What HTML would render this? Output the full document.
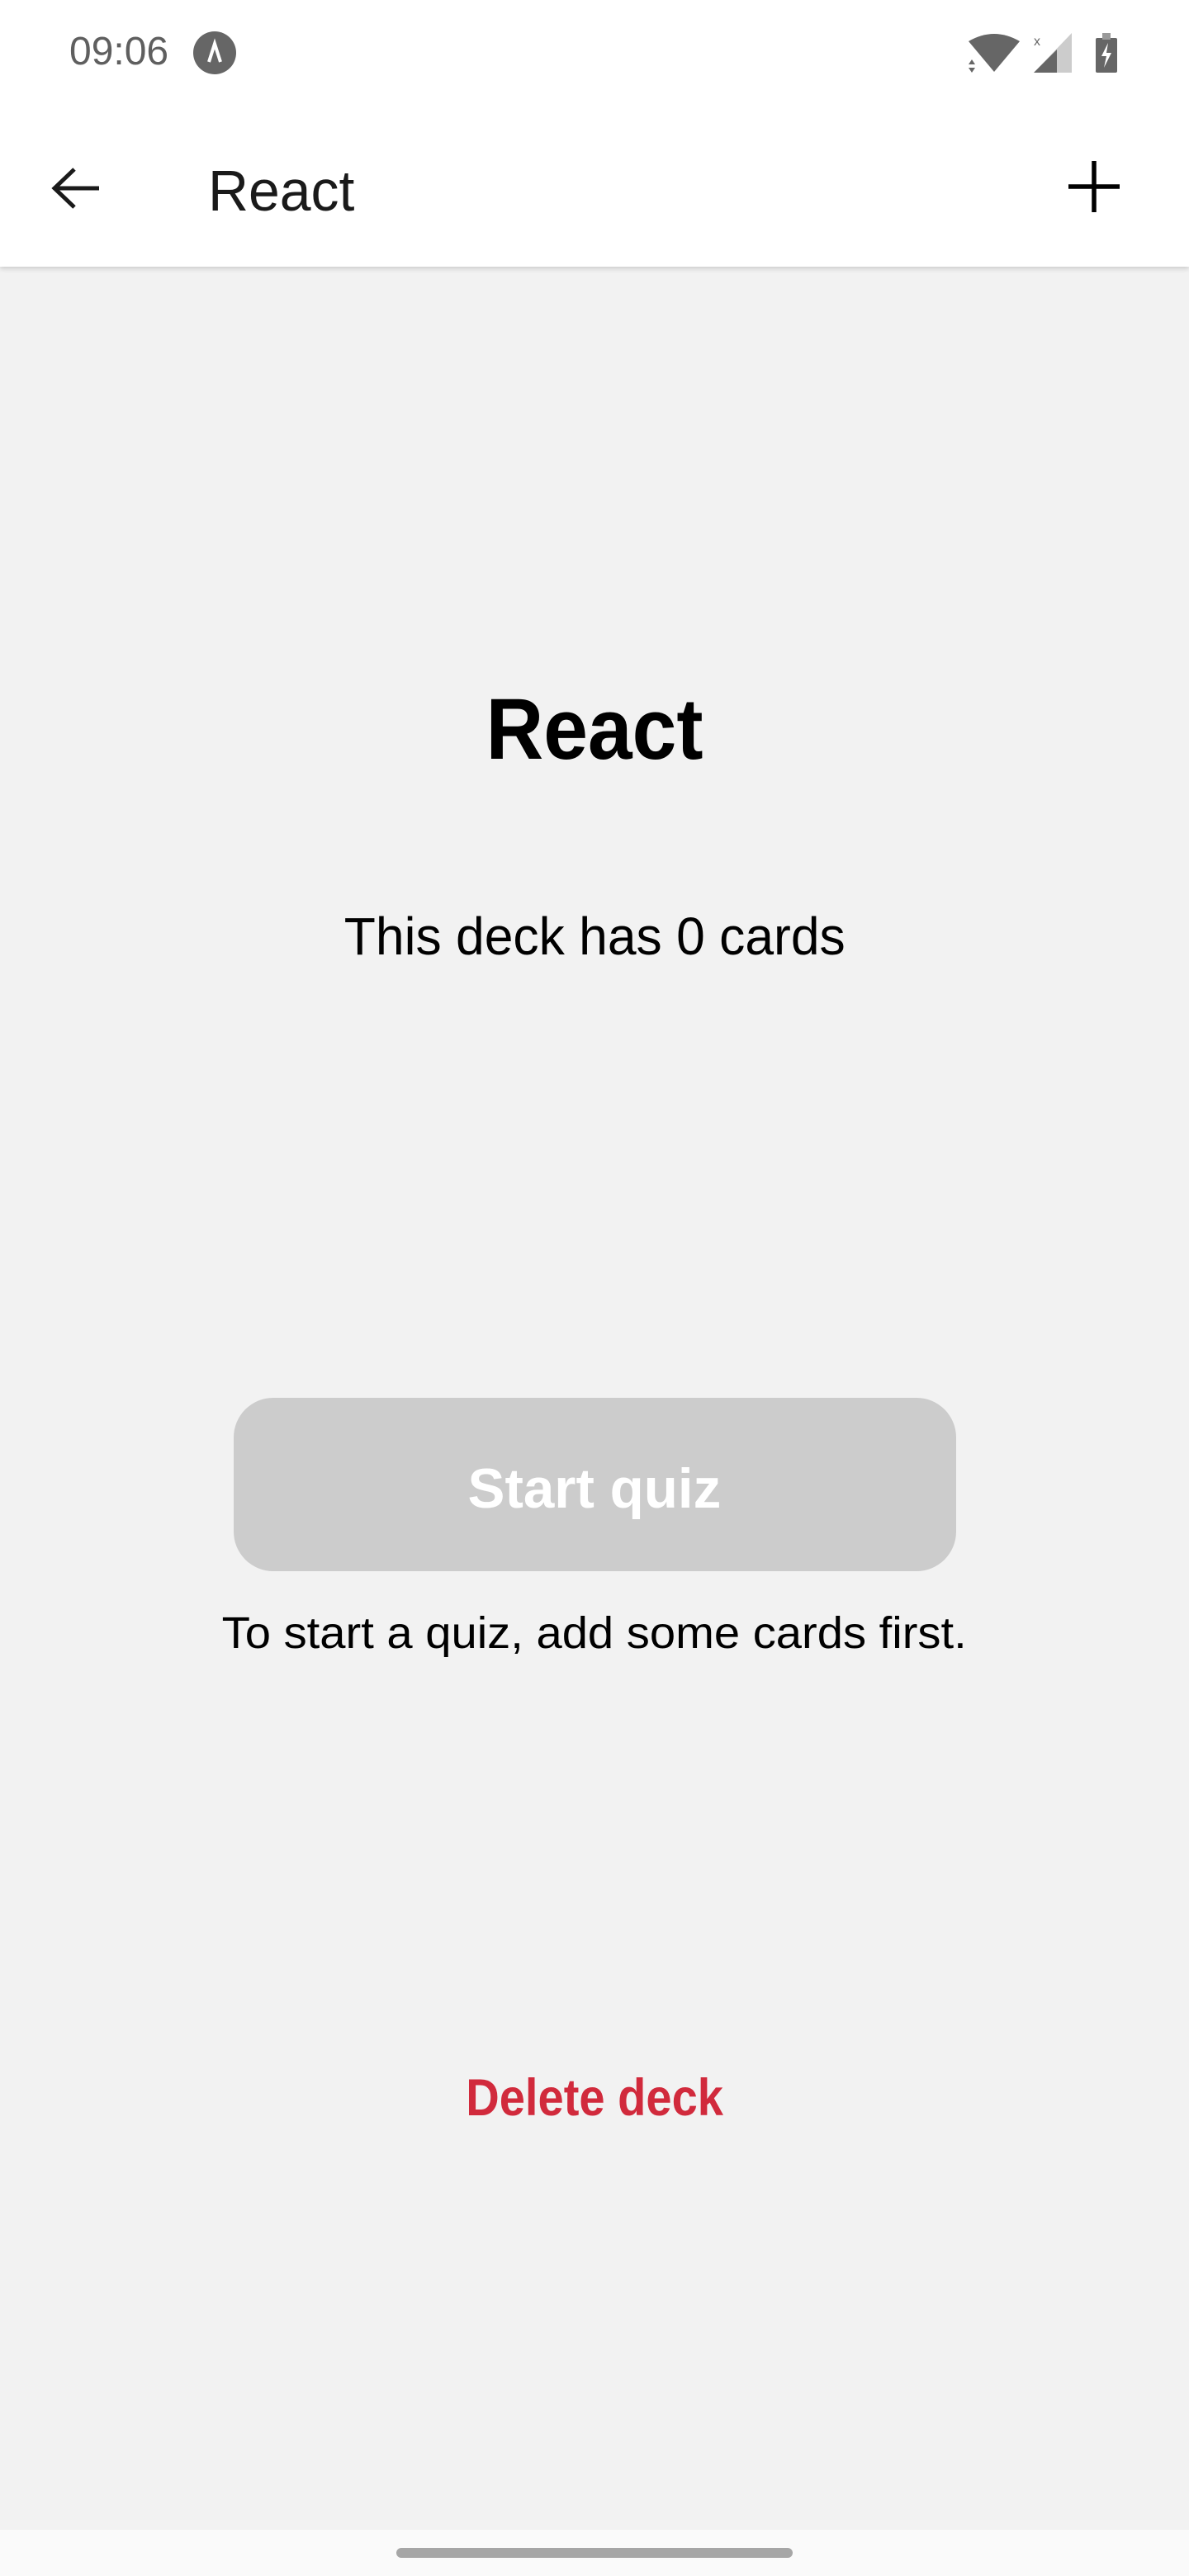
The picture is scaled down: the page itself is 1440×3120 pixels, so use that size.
<!DOCTYPE html>
<html><head><meta charset="utf-8"><style>
*{margin:0;padding:0;box-sizing:border-box}
html,body{width:1440px;height:3120px;overflow:hidden;background:#f2f2f2;font-family:"Liberation Sans",Arial,sans-serif}
.abs{position:absolute}
.c{position:absolute;left:0;width:1440px;text-align:center;line-height:1;white-space:nowrap}
.c span{display:inline-block}
</style></head><body>
<div class="abs" style="left:0;top:0;width:1440px;height:323px;background:#fff;box-shadow:0 2px 6px rgba(0,0,0,0.18)"></div>
<!-- status bar -->
<div class="abs" style="left:84px;top:39px;font-size:48px;line-height:1;color:#5f5f5f;transform:scaleX(1.0);transform-origin:left">09:06</div>
<svg class="abs" style="left:234px;top:38px" width="52" height="52" viewBox="0 0 52 52"><circle cx="26" cy="26" r="26" fill="#666"/><path d="M19 37 L26 15 L33 37" stroke="#fff" stroke-width="4" fill="none"/></svg>
<svg class="abs" style="left:1170px;top:38px" width="190" height="52" viewBox="0 0 190 52">
<path d="M3 12 Q34 -6 65 12 L34 49 Z" fill="#666"/>
<path d="M3 40 l4 -6 l4 6z M3 44 l8 0 l-4 6z" fill="#666"/>
<path d="M128 2 V50 H82 Z" fill="#ccc"/><path d="M82 50 L110 22 V50 Z" fill="#666"/>
<text x="82" y="17" font-size="16" fill="#666" font-family="Liberation Sans">x</text>
<rect x="157" y="8" width="26" height="42" rx="2" fill="#666"/><rect x="165" y="2" width="10" height="8" fill="#999"/>
<path d="M172 14 L164 30 H170 L167 44 L176 26 H170 Z" fill="#fff"/>
</svg>
<!-- header -->
<svg class="abs" style="left:60px;top:198px" width="64" height="60" viewBox="0 0 64 60"><path d="M60 30 H8 M30 7 L6 30 L30 53" stroke="#1a1a1a" stroke-width="5" fill="none"/></svg>
<div class="abs" style="left:252px;top:196px;font-size:70px;line-height:1;color:#1a1a1a;transform:scaleX(0.97);transform-origin:left">React</div>
<svg class="abs" style="left:1290px;top:193px" width="70" height="66" viewBox="0 0 70 66"><path d="M35 2 V64 M4 33 H66" stroke="#000" stroke-width="5.5" fill="none"/></svg>
<!-- content -->
<div class="c" style="top:831px;font-size:105px;font-weight:bold;color:#000"><span style="transform:scaleX(0.92)">React</span></div>
<div class="c" style="top:1102px;font-size:64px;color:#000"><span style="transform:scaleX(0.975)">This deck has 0 cards</span></div>
<div class="abs" style="left:283px;top:1693px;width:875px;height:210px;border-radius:48px;background:#cccccc"></div>
<div class="c" style="top:1769px;font-size:68px;font-weight:bold;color:#fff"><span style="transform:scaleX(0.99)">Start quiz</span></div>
<div class="c" style="top:1951px;font-size:54px;color:#000"><span style="transform:scaleX(1.04)">To start a quiz, add some cards first.</span></div>
<div class="c" style="top:2510px;font-size:63px;font-weight:bold;color:#d12a3c"><span style="transform:scaleX(0.89)">Delete deck</span></div>
<!-- nav bar -->
<div class="abs" style="left:0;top:3064px;width:1440px;height:56px;background:#fafafa"></div>
<div class="abs" style="left:480px;top:3086px;width:480px;height:12px;border-radius:6px;background:#a6a6a6"></div>
</body></html>
